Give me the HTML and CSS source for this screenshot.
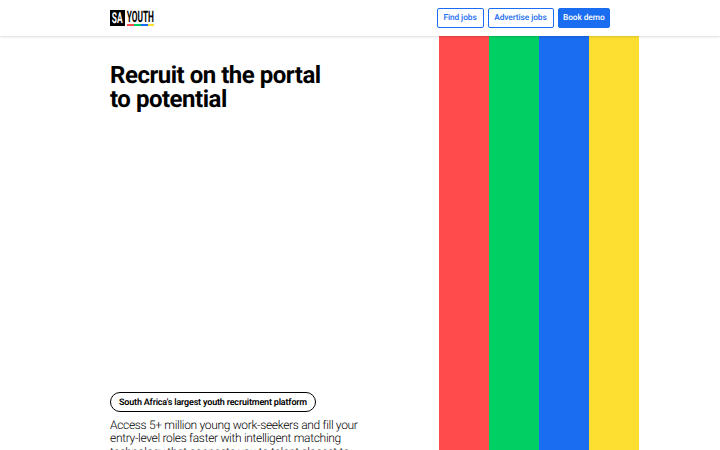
FILE: index.html
```
<!DOCTYPE html>
<html lang="en">
	<head>
		<meta charset="utf-8">
		<title>SA Youth</title>
		<link rel="stylesheet" href="styles.css">
	</head>
	<body>
		<header class="header">
			<div class="container nav">
				<a class="logo" href="#">
					<svg width="45" height="16" viewBox="0 0 45 16">
						<rect width="15" height="16" fill="#000"/>
						<text class="logo-text" transform="translate(1.8 13.4) scale(0.56 1)" font-size="15" fill="#fff">SA</text>
						<text class="logo-text" transform="translate(16.7 11.6) scale(0.53 1)" font-size="15.7">YOUTH</text>
						<rect x="17" y="14" width="7" height="2" fill="#ff4b4b"/>
						<rect x="24" y="14" width="7" height="2" fill="#00cf63"/>
						<rect x="31" y="14" width="7" height="2" fill="#1a6df0"/>
						<rect x="38" y="14" width="6" height="2" fill="#fcdf30"/>
					</svg>
				</a>
				<nav class="buttons">
					<a class="button find" href="#">Find jobs</a>
					<a class="button advertise" href="#">Advertise jobs</a>
					<a class="button demo" href="#">Book demo</a>
				</nav>
			</div>
		</header>
		<main class="container hero">
			<div class="copy">
				<h1>Recruit on the portal<br>to potential</h1>
				<div class="intro">
					<span class="pill">South Africa's largest youth recruitment platform</span>
					<p>Access 5+ million young work-seekers and fill your<br>entry-level roles faster with intelligent matching<br>technology that connects you to talent closest to</p>
				</div>
			</div>
			<div class="stripes">
				<div class="red"></div>
				<div class="green"></div>
				<div class="blue"></div>
				<div class="yellow"></div>
			</div>
		</main>
	</body>
</html>
```
FILE: styles.css
```
* {box-sizing: border-box;}
html, body {margin: 0; padding: 0; height: 100%; overflow: hidden;}
body {display: flex; flex-direction: column; font-family: Roboto, "Liberation Sans", sans-serif; color: #000; background-color: #fff; text-rendering: geometricPrecision;}
a {text-decoration: none;}
.container {width: 500px; margin: 0 auto;}

.header {position: relative; flex: none; height: 36px; background-color: #fff; box-shadow: 0 0 3px rgba(0, 0, 0, 0.25);}
.nav {display: flex; justify-content: space-between; align-items: center; height: 36px;}
.logo {display: block; height: 16px;}
.logo svg {display: block; overflow: visible;}
.logo-text {font-family: Roboto, sans-serif; font-weight: 700;}
.buttons {display: flex; gap: 4px;}
.button {height: 20px; border: 1px solid #1a6df0; border-radius: 2px; font-size: 8.3px; font-weight: 500; line-height: 19px; text-align: center; letter-spacing: -0.06px; color: #1a6df0; white-space: nowrap;}
.find {width: 47px;}
.advertise {width: 66px;}
.demo {width: 52.5px; color: #fff; background-color: #1a6df0;}

.hero {display: flex; flex: 1; min-height: 0;}
.copy {display: flex; flex: none; flex-direction: column; width: 329px; padding-top: 27px;}
h1 {margin: 0; font-size: 24px; font-weight: 700; line-height: 24px; letter-spacing: -0.48px;}
.intro {margin-top: 281px;}
.pill {display: block; width: 206px; height: 20px; border: 1.3px solid #000; border-radius: 10px; font-size: 9px; font-weight: 600; line-height: 20px; text-align: center; letter-spacing: -0.18px; white-space: nowrap;}
.intro p {margin: 6.5px 0 0; font-size: 12px; font-weight: 300; line-height: 13.5px; letter-spacing: -0.32px; white-space: nowrap;}

.stripes {display: grid; flex: none; grid-template-columns: repeat(4, 50px);}
.red {background-color: #ff4b4b;}
.green {background-color: #00cf63;}
.blue {background-color: #1a6df0;}
.yellow {background-color: #fcdf30;}
```
